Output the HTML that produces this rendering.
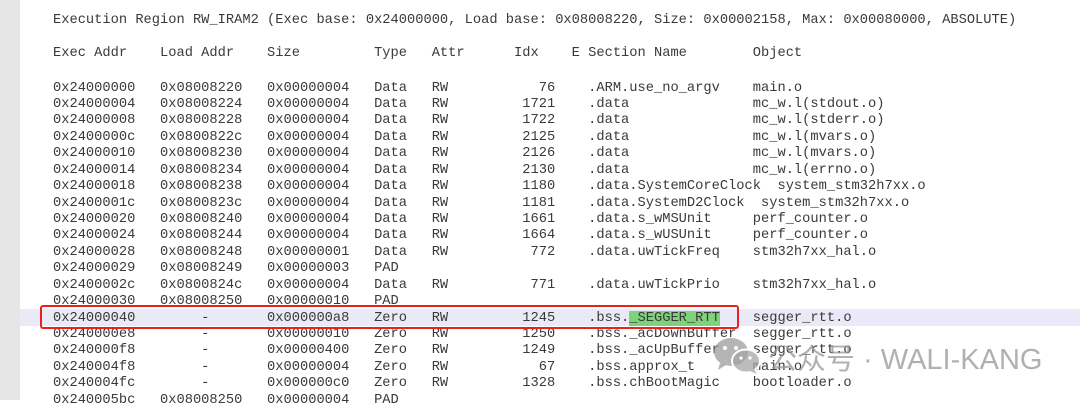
<!DOCTYPE html>
<html><head><meta charset="utf-8"><style>
html,body{margin:0;padding:0;background:#fff;}
body{width:1080px;height:400px;position:relative;overflow:hidden;font-family:"Liberation Mono",monospace;font-size:13.72px;color:#3a3a3a;}
.bar{position:absolute;left:0;top:0;width:20px;height:400px;background:#e6e6e6;}
.r{position:absolute;left:53px;height:16px;line-height:16px;white-space:pre;width:1000px;margin-top:1.5px;}
.hl{position:absolute;left:20px;top:309px;width:1060px;height:17px;background:#e9e9f7;}
.box{position:absolute;left:40px;top:305px;width:695px;height:20px;border:2.5px solid #e8221c;border-radius:3px;}
.g{background:#7ed27a;}
.wm{position:absolute;left:768px;top:336px;font-family:"Liberation Sans","Noto Sans CJK SC",sans-serif;font-size:29px;color:rgba(150,150,150,0.75);white-space:pre;}
</style></head><body>
<div class="bar"></div>
<div class="hl"></div>
<div class="r" style="top:11px">Execution Region RW_IRAM2 (Exec base: 0x24000000, Load base: 0x08008220, Size: 0x00002158, Max: 0x00080000, ABSOLUTE)</div>
<div class="r" style="top:44px">Exec Addr    Load Addr    Size         Type   Attr      Idx    E Section Name        Object</div>
<div class="r" style="top:79px">0x24000000   0x08008220   0x00000004   Data   RW           76    .ARM.use_no_argv    main.o</div>
<div class="r" style="top:95.4px">0x24000004   0x08008224   0x00000004   Data   RW         1721    .data               mc_w.l(stdout.o)</div>
<div class="r" style="top:111.9px">0x24000008   0x08008228   0x00000004   Data   RW         1722    .data               mc_w.l(stderr.o)</div>
<div class="r" style="top:128.3px">0x2400000c   0x0800822c   0x00000004   Data   RW         2125    .data               mc_w.l(mvars.o)</div>
<div class="r" style="top:144.7px">0x24000010   0x08008230   0x00000004   Data   RW         2126    .data               mc_w.l(mvars.o)</div>
<div class="r" style="top:161.2px">0x24000014   0x08008234   0x00000004   Data   RW         2130    .data               mc_w.l(errno.o)</div>
<div class="r" style="top:177.6px">0x24000018   0x08008238   0x00000004   Data   RW         1180    .data.SystemCoreClock  system_stm32h7xx.o</div>
<div class="r" style="top:194px">0x2400001c   0x0800823c   0x00000004   Data   RW         1181    .data.SystemD2Clock  system_stm32h7xx.o</div>
<div class="r" style="top:210.4px">0x24000020   0x08008240   0x00000004   Data   RW         1661    .data.s_wMSUnit     perf_counter.o</div>
<div class="r" style="top:226.9px">0x24000024   0x08008244   0x00000004   Data   RW         1664    .data.s_wUSUnit     perf_counter.o</div>
<div class="r" style="top:243.3px">0x24000028   0x08008248   0x00000001   Data   RW          772    .data.uwTickFreq    stm32h7xx_hal.o</div>
<div class="r" style="top:259.7px">0x24000029   0x08008249   0x00000003   PAD</div>
<div class="r" style="top:276.2px">0x2400002c   0x0800824c   0x00000004   Data   RW          771    .data.uwTickPrio    stm32h7xx_hal.o</div>
<div class="r" style="top:292.6px">0x24000030   0x08008250   0x00000010   PAD</div>
<div class="r" style="top:309px">0x24000040        -       0x000000a8   Zero   RW         1245    .bss.<span class="g">_SEGGER_RTT</span>    segger_rtt.o</div>
<div class="r" style="top:325.5px">0x240000e8        -       0x00000010   Zero   RW         1250    .bss._acDownBuffer  segger_rtt.o</div>
<div class="r" style="top:341.9px">0x240000f8        -       0x00000400   Zero   RW         1249    .bss._acUpBuffer    segger_rtt.o</div>
<div class="r" style="top:358.3px">0x240004f8        -       0x00000004   Zero   RW           67    .bss.approx_t       main.o</div>
<div class="r" style="top:374.7px">0x240004fc        -       0x000000c0   Zero   RW         1328    .bss.chBootMagic    bootloader.o</div>
<div class="r" style="top:391.2px">0x240005bc   0x08008250   0x00000004   PAD</div>
<div class="box"></div>
<svg style="position:absolute;left:712px;top:336px" width="52" height="40" viewBox="0 0 52 40">
<ellipse cx="19" cy="16" rx="17" ry="14" fill="rgba(150,150,150,0.7)"/>
<path d="M8 27 L6 34 L14 29 Z" fill="rgba(150,150,150,0.7)"/>
<ellipse cx="34" cy="25" rx="14" ry="11.5" fill="rgba(165,165,165,0.75)" stroke="#fff" stroke-width="2"/>
<path d="M42 33 L45 38 L38 35 Z" fill="rgba(165,165,165,0.75)"/>
<circle cx="13" cy="12" r="2" fill="#fff"/><circle cx="24" cy="12" r="2" fill="#fff"/>
<circle cx="29" cy="22" r="1.6" fill="#fff"/><circle cx="38" cy="22" r="1.6" fill="#fff"/>
</svg>
<div class="wm">公众号 · WALI-KANG</div>
</body></html>
